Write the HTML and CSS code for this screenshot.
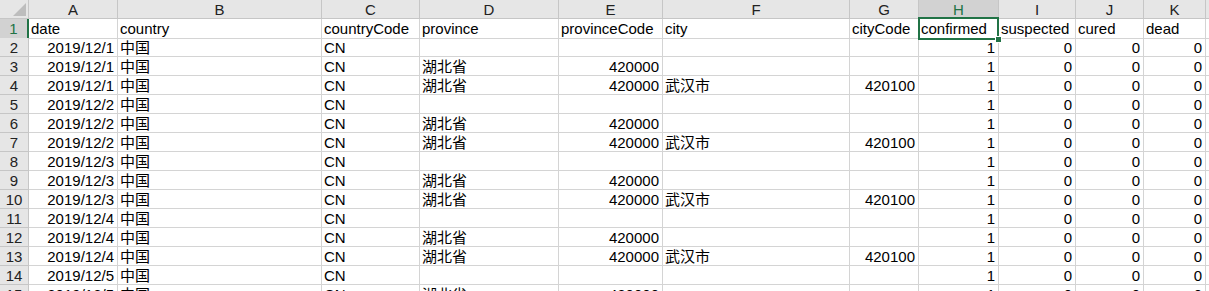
FILE: index.html
```html
<!DOCTYPE html>
<html lang="zh-CN">
<head>
    <meta charset="UTF-8">
    <meta name="viewport" content="width=device-width, initial-scale=1.0">
    <title>疫情数据</title>
    <link rel="stylesheet" href="styles.css">
</head>
<body>
    <div class="sheet">
        <div class="row head">
            <div class="corner"><svg width="13" height="13" viewBox="0 0 13 13"><polygon points="13,0 13,13 0,13" fill="#bdbdbd"/></svg></div>
            <div class="col">A</div><div class="col">B</div><div class="col">C</div><div class="col">D</div>
            <div class="col">E</div><div class="col">F</div><div class="col">G</div><div class="col active">H</div>
            <div class="col">I</div><div class="col">J</div><div class="col">K</div><div class="col"></div>
        </div>
        <div class="row">
            <div class="num active">1</div>
            <div>date</div><div>country</div><div>countryCode</div><div>province</div><div>provinceCode</div>
            <div>city</div><div>cityCode</div><div class="selected">confirmed</div><div>suspected</div><div>cured</div><div>dead</div><div></div>
        </div>
        <div class="row">
            <div class="num">2</div>
            <div class="r">2019/12/1</div><div>中国</div><div>CN</div><div></div><div></div>
            <div></div><div></div><div class="r">1</div><div class="r">0</div><div class="r">0</div><div class="r">0</div><div></div>
        </div>
        <div class="row">
            <div class="num">3</div>
            <div class="r">2019/12/1</div><div>中国</div><div>CN</div><div>湖北省</div><div class="r">420000</div>
            <div></div><div></div><div class="r">1</div><div class="r">0</div><div class="r">0</div><div class="r">0</div><div></div>
        </div>
        <div class="row">
            <div class="num">4</div>
            <div class="r">2019/12/1</div><div>中国</div><div>CN</div><div>湖北省</div><div class="r">420000</div>
            <div>武汉市</div><div class="r">420100</div><div class="r">1</div><div class="r">0</div><div class="r">0</div><div class="r">0</div><div></div>
        </div>
        <div class="row">
            <div class="num">5</div>
            <div class="r">2019/12/2</div><div>中国</div><div>CN</div><div></div><div></div>
            <div></div><div></div><div class="r">1</div><div class="r">0</div><div class="r">0</div><div class="r">0</div><div></div>
        </div>
        <div class="row">
            <div class="num">6</div>
            <div class="r">2019/12/2</div><div>中国</div><div>CN</div><div>湖北省</div><div class="r">420000</div>
            <div></div><div></div><div class="r">1</div><div class="r">0</div><div class="r">0</div><div class="r">0</div><div></div>
        </div>
        <div class="row">
            <div class="num">7</div>
            <div class="r">2019/12/2</div><div>中国</div><div>CN</div><div>湖北省</div><div class="r">420000</div>
            <div>武汉市</div><div class="r">420100</div><div class="r">1</div><div class="r">0</div><div class="r">0</div><div class="r">0</div><div></div>
        </div>
        <div class="row">
            <div class="num">8</div>
            <div class="r">2019/12/3</div><div>中国</div><div>CN</div><div></div><div></div>
            <div></div><div></div><div class="r">1</div><div class="r">0</div><div class="r">0</div><div class="r">0</div><div></div>
        </div>
        <div class="row">
            <div class="num">9</div>
            <div class="r">2019/12/3</div><div>中国</div><div>CN</div><div>湖北省</div><div class="r">420000</div>
            <div></div><div></div><div class="r">1</div><div class="r">0</div><div class="r">0</div><div class="r">0</div><div></div>
        </div>
        <div class="row">
            <div class="num">10</div>
            <div class="r">2019/12/3</div><div>中国</div><div>CN</div><div>湖北省</div><div class="r">420000</div>
            <div>武汉市</div><div class="r">420100</div><div class="r">1</div><div class="r">0</div><div class="r">0</div><div class="r">0</div><div></div>
        </div>
        <div class="row">
            <div class="num">11</div>
            <div class="r">2019/12/4</div><div>中国</div><div>CN</div><div></div><div></div>
            <div></div><div></div><div class="r">1</div><div class="r">0</div><div class="r">0</div><div class="r">0</div><div></div>
        </div>
        <div class="row">
            <div class="num">12</div>
            <div class="r">2019/12/4</div><div>中国</div><div>CN</div><div>湖北省</div><div class="r">420000</div>
            <div></div><div></div><div class="r">1</div><div class="r">0</div><div class="r">0</div><div class="r">0</div><div></div>
        </div>
        <div class="row">
            <div class="num">13</div>
            <div class="r">2019/12/4</div><div>中国</div><div>CN</div><div>湖北省</div><div class="r">420000</div>
            <div>武汉市</div><div class="r">420100</div><div class="r">1</div><div class="r">0</div><div class="r">0</div><div class="r">0</div><div></div>
        </div>
        <div class="row">
            <div class="num">14</div>
            <div class="r">2019/12/5</div><div>中国</div><div>CN</div><div></div><div></div>
            <div></div><div></div><div class="r">1</div><div class="r">0</div><div class="r">0</div><div class="r">0</div><div></div>
        </div>
        <div class="row">
            <div class="num">15</div>
            <div class="r">2019/12/5</div><div>中国</div><div>CN</div><div>湖北省</div><div class="r">420000</div>
            <div></div><div></div><div class="r">1</div><div class="r">0</div><div class="r">0</div><div class="r">0</div><div></div>
        </div>
    </div>
</body>
</html>
```

FILE: styles.css
```css
body {
    margin: 0;
    background: #fff;
    overflow: hidden;
    font-family: "Liberation Sans", "Noto Sans CJK SC", sans-serif;
    font-size: 15px;
    color: #000;
}
.sheet {
    width: 1209px;
}
.row {
    display: grid;
    grid-template-columns: 29px 89px 204px 98px 139px 104px 187px 69px 80px 77px 68px 62px 1fr;
    height: 19px;
}
.row > div {
    box-sizing: border-box;
    border-right: 1px solid #d4d4d4;
    border-bottom: 1px solid #d4d4d4;
    padding: 0 2px;
    line-height: 19px;
    white-space: nowrap;
    overflow: hidden;
}
.row > .r {
    text-align: right;
    padding-right: 3px;
}
.head > div {
    background: #e6e6e6;
    border-right-color: #c6c6c6;
    border-bottom-color: #c6c6c6;
    text-align: center;
    color: #222;
}
.head .corner {
    display: flex;
    align-items: flex-end;
    justify-content: flex-end;
    padding: 0 2px 2px 0;
}
.head .active {
    background: #d2d2d2;
    color: #217346;
    border-bottom: 2px solid #217346;
}
.row > .num {
    background: #e6e6e6;
    border-right-color: #c6c6c6;
    border-bottom-color: #c6c6c6;
    text-align: center;
    color: #222;
    padding: 0;
}
.row > .num.active {
    background: #d2d2d2;
    color: #217346;
    border-right: 2px solid #217346;
}
.row > .selected {
    position: relative;
    overflow: visible;
}
.selected::after {
    content: "";
    position: absolute;
    left: -1px;
    top: -2px;
    right: -1px;
    bottom: -2px;
    border: 2px solid #217346;
}
.selected::before {
    content: "";
    position: absolute;
    right: -4px;
    bottom: -5px;
    width: 5px;
    height: 5px;
    background: #217346;
    border: 1px solid #fff;
    z-index: 1;
}
```
